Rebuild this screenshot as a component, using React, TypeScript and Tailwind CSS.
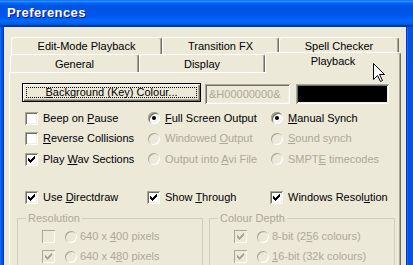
import React from "react";

const sunken =
  "shadow-[inset_1px_1px_0_#aca899,inset_-1px_-1px_0_#ffffff,inset_2px_2px_0_#716f64,inset_-2px_-2px_0_#f1efe2]";

/** label with "&" marking the access key */
function Label({ text, disabled }: { text: string; disabled?: boolean }) {
  const i = text.indexOf("&");
  const body =
    i < 0 ? (
      text
    ) : (
      <>
        {text.slice(0, i)}
        <span className="underline underline-offset-[1px]">{text[i + 1]}</span>
        {text.slice(i + 2)}
      </>
    );
  return (
    <span className={`whitespace-nowrap leading-[13px] ${disabled ? "text-[#aca899]" : "text-black"}`}>
      {body}
    </span>
  );
}

const checkCols = [2, 3, 4, 3, 2, 1, 0];

function Check({ checked, disabled }: { checked?: boolean; disabled?: boolean }) {
  return (
    <span
      className={`relative block w-[13px] h-[13px] shrink-0 ${
        disabled
          ? "bg-[#ece9d8] shadow-[inset_1px_1px_0_#aca899,inset_-1px_-1px_0_#ffffff]"
          : `bg-white ${sunken}`
      }`}
    >
      {checked && (
        <svg width="13" height="13" viewBox="0 0 13 13" className="absolute inset-0">
          <path
            d={checkCols.map((r, c) => `M${3 + c} ${3 + r}h1v3h-1z`).join("")}
            fill={disabled ? "#aca899" : "#000"}
          />
        </svg>
      )}
    </span>
  );
}

function Radio({ on, disabled }: { on?: boolean; disabled?: boolean }) {
  return (
    <span
      className={`relative flex items-center justify-center w-[12px] h-[12px] shrink-0 rounded-full ${
        disabled
          ? "bg-[#ece9d8] shadow-[inset_1px_1px_0_#aca899,inset_-1px_-1px_0_#ffffff]"
          : `bg-white ${sunken}`
      }`}
    >
      {on && <span className="block w-[4px] h-[4px] rounded-full bg-black" />}
    </span>
  );
}

function Opt({
  kind,
  text,
  on,
  disabled,
}: {
  kind: "check" | "radio";
  text: string;
  on?: boolean;
  disabled?: boolean;
}) {
  return (
    <div className="flex items-center gap-[5px]">
      {kind === "check" ? <Check checked={on} disabled={disabled} /> : <Radio on={on} disabled={disabled} />}
      <Label text={text} disabled={disabled} />
    </div>
  );
}

function Tab({ label, w, sel }: { label: string; w: number; sel?: boolean }) {
  return (
    <div
      style={{ width: w }}
      className={`shrink-0 flex items-center justify-center bg-[#ece9d8] border-t border-l border-r border-t-white border-l-white border-r-[#716f64] rounded-t-[3px] shadow-[inset_-1px_0_0_#aca899] ${
        sel ? "h-[21px] -mb-[1px] relative z-10 pb-[3px]" : "h-full pt-[1px]"
      }`}
    >
      {label}
    </div>
  );
}

function Group({ title, rows }: { title: string; rows: { text: string; on: boolean }[] }) {
  return (
    <fieldset className="w-[186px] h-[70px] border border-[#d0d0bf] p-0 m-0">
      <legend className="ml-[8px] px-[2px] leading-[13px] text-[#aca899]">{title}</legend>
      <div className="flex flex-col gap-[7px] pt-[5px] pl-[24px]">
        {rows.map((r) => (
          <div key={r.text} className="flex items-center h-[13px]">
            <Check checked={r.on} disabled />
            <span className="w-[10px]" />
            <Radio disabled />
            <span className="w-[3px]" />
            <Label text={r.text} disabled />
          </div>
        ))}
      </div>
    </fieldset>
  );
}

export default function App() {
  return (
    <div className="relative w-[413px] h-[265px] overflow-hidden flex flex-col font-['Liberation_Sans',Arial,sans-serif] text-[11px] text-black">
      {/* title bar */}
      <div className="h-[27px] shrink-0 flex items-center pl-[7px] pb-[1px] bg-[linear-gradient(to_bottom,#0058ee_0%,#3a93ff_4%,#288eff_6%,#127dff_8%,#036ffc_10%,#0262ee_14%,#0057e5_20%,#0054e3_24%,#0055eb_56%,#005bf5_66%,#026afe_76%,#0062ef_86%,#0052d6_92%,#0040ab_94%,#003092_100%)]">
        <span className="text-white font-bold text-[13px] tracking-[0.4px] [text-shadow:1px_1px_0_#0f1089]">Preferences</span>
      </div>

      <div className="flex flex-1 min-h-0">
        <div className="w-[4px] shrink-0 bg-[#0055e5] shadow-[inset_1px_0_0_#166aee,inset_-1px_0_0_#0831d9]" />

        {/* client area */}
        <div className="w-[402px] shrink-0 bg-[#ece9d8] pt-[10px] pl-[5px]">
          {/* tabs */}
          <div className="flex pl-[2px] h-[17px]">
            <Tab label="Edit-Mode Playback" w={151} />
            <Tab label="Transition FX" w={117} />
            <Tab label="Spell Checker" w={120} />
          </div>
          <div className="flex items-end pl-[1px] h-[18px]">
            <Tab label="General" w={129} />
            <Tab label="Display" w={126} />
            <Tab label="Playback" w={136} sel />
          </div>

          {/* panel */}
          <div className="w-[392px] h-[200px] border-t border-l border-r border-t-white border-l-white border-r-[#716f64] shadow-[inset_-1px_0_0_#aca899]">
            <div className="flex items-start mt-[10px] ml-[12px]">
              <div className="w-[179px] h-[19px] border border-black bg-[#ece9d8] shadow-[inset_1px_1px_0_#ffffff,inset_-1px_-1px_0_#716f64,inset_-2px_-2px_0_#aca899] p-[3px]">
                <div className="h-full border border-dotted border-black flex items-center justify-center">
                  <Label text="&Background (Key) Colour..." />
                </div>
              </div>
              <div className={`ml-[4px] mt-[1px] w-[85px] h-[20px] bg-[#ece9d8] ${sunken} flex items-center pl-[4px] text-[#aca899]`}>
                &amp;H00000000&amp;
              </div>
              <div className="ml-[6px] mt-[1px] w-[93px] h-[20px] bg-black shadow-[inset_1px_1px_0_#aca899,inset_-1px_-1px_0_#ffffff,inset_2px_2px_0_#716f64,inset_-2px_-2px_0_#f1efe2]" />
            </div>

            <div className="mt-[4px] pl-[15px] grid grid-cols-[123px_123px_1fr] grid-rows-[20px_21px_20px] items-center">
              <Opt kind="check" text="Beep on &Pause" />
              <Opt kind="radio" text="&Full Screen Output" on />
              <Opt kind="radio" text="&Manual Synch" on />
              <Opt kind="check" text="&Reverse Collisions" />
              <Opt kind="radio" text="Windowed &Output" disabled />
              <Opt kind="radio" text="&Sound synch" disabled />
              <Opt kind="check" text="Play &Wav Sections" on />
              <Opt kind="radio" text="Output into &Avi File" disabled />
              <Opt kind="radio" text="SMPT&E timecodes" disabled />
            </div>

            <div className="mt-[19px] pl-[15px] h-[19px] grid grid-cols-[122px_123px_1fr] items-center">
              <Opt kind="check" text="Use &Directdraw" on />
              <Opt kind="check" text="Show &Through" on />
              <Opt kind="check" text="Windows Resol&ution" on />
            </div>

            <div className="flex gap-[6px] ml-[7px] mt-[5px]">
              <Group
                title="Resolution"
                rows={[
                  { text: "640 x &400 pixels", on: false },
                  { text: "640 x 4&80 pixels", on: true },
                ]}
              />
              <Group
                title="Colour Depth"
                rows={[
                  { text: "8-bit (2&56 colours)", on: true },
                  { text: "&16-bit (32k colours)", on: true },
                ]}
              />
            </div>
          </div>
        </div>

        <div className="flex-1 bg-[#0055e5] shadow-[inset_1px_0_0_#0831d9,inset_2px_0_0_#166aee]" />
      </div>

      {/* mouse pointer */}
      <svg viewBox="0 0 13 21" className="absolute z-20 left-[373px] top-[63px] w-[13px] h-[21px] max-w-none">
        <path
          d="M0.5 0.5V16.5L4.5 12.5L7.5 18.5L9.5 17.5L6.5 11.5H11.5Z"
          fill="#ffffff"
          stroke="#000000"
          strokeWidth="1"
        />
      </svg>
    </div>
  );
}
